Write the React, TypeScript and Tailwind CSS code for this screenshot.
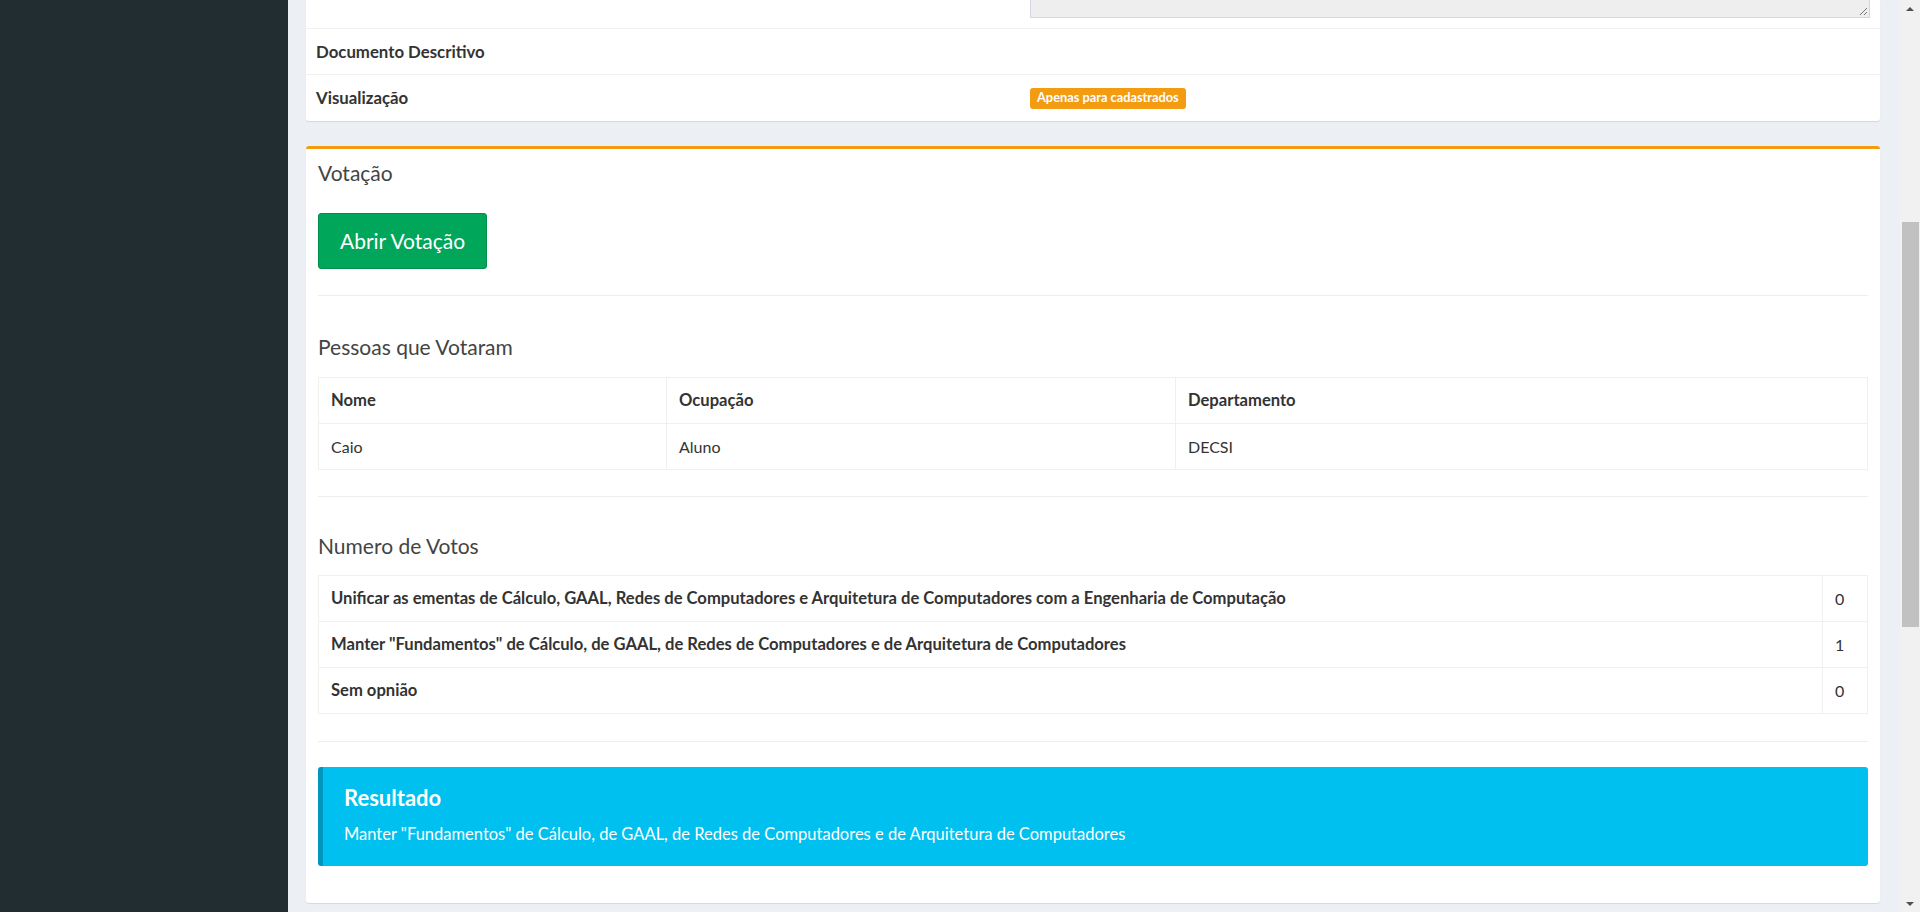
import React from 'react';

const font = { fontFamily: 'Lato, "Liberation Sans", sans-serif' };

const Divider = () => <div className="h-px bg-[#eeeeee]" />;

const SectionTitle = ({ children }: { children: React.ReactNode }) => (
  <h3 className="text-[21px] leading-[22px] text-[#444] font-normal">{children}</h3>
);

const InfoRow = ({
  label,
  children,
  last,
}: {
  label: string;
  children?: React.ReactNode;
  last?: boolean;
}) => (
  <div
    className={
      'grid grid-cols-[714px_1fr] h-[46px] items-center ' +
      (last ? '' : 'border-b border-[#f0f0f0]')
    }
  >
    <div className="px-[10px] text-[16.8px] font-bold text-[#333]">{label}</div>
    <div className="px-[10px] flex items-center">{children}</div>
  </div>
);

const people = [{ nome: 'Caio', ocupacao: 'Aluno', departamento: 'DECSI' }];

const votes = [
  {
    option:
      'Unificar as ementas de Cálculo, GAAL, Redes de Computadores e Arquitetura de Computadores com a Engenharia de Computação',
    count: 0,
  },
  {
    option:
      'Manter "Fundamentos" de Cálculo, de GAAL, de Redes de Computadores e de Arquitetura de Computadores',
    count: 1,
  },
  { option: 'Sem opnião', count: 0 },
];

const cell = 'border border-[#f0f0f0] h-[46px] px-[12px] text-left align-middle';
const normal = ' font-normal text-[16px]';
const bold = ' font-bold text-[16.6px]';

const Scrollbar = () => (
  <div className="w-[20px] h-full bg-[#f1f1f1] flex flex-col items-center">
    <div className="h-[17px] w-full flex items-center justify-center">
      <div className="w-0 h-0 border-x-[4px] border-x-transparent border-b-[4px] border-b-[#505050]" />
    </div>
    <div className="h-[205px]" />
    <div className="h-[405px] w-[17px] bg-[#c1c1c1]" />
    <div className="flex-1" />
    <div className="h-[17px] w-full flex items-center justify-center">
      <div className="w-0 h-0 border-x-[4px] border-x-transparent border-t-[4px] border-t-[#505050]" />
    </div>
  </div>
);

export default function App() {
  return (
    <div className="flex h-[912px] w-full overflow-hidden" style={font}>
      <aside className="w-[288px] shrink-0 bg-[#222d32]" />
      <main className="flex-1 bg-[#ecf0f5] pl-[18px] pr-[20px] overflow-hidden">
        {/* detalhes da proposta (parte de cima cortada) */}
        <div className="bg-white rounded-b-[3px] shadow-[0_1px_1px_rgba(0,0,0,0.1)]">
          <div className="grid grid-cols-[714px_1fr] grid-rows-[28px] h-[29px] border-b border-[#f0f0f0] overflow-hidden">
            <div />
            <div className="h-[28px] overflow-hidden px-[10px] flex items-end pb-[10px]">
              <div className="relative shrink-0 w-full h-[40px] bg-[#eeeeee] border border-[#d2d6de]">
                <svg
                  className="absolute right-[2px] bottom-[2px]"
                  width="8"
                  height="8"
                  viewBox="0 0 8 8"
                >
                  <path d="M1 8 L8 1 M5 8 L8 5" stroke="#777" strokeWidth="1" />
                </svg>
              </div>
            </div>
          </div>
          <InfoRow label="Documento Descritivo" />
          <InfoRow label="Visualização" last>
            <span className="inline-flex items-center h-[21px] px-[7px] rounded-[3px] bg-[#f39c12] text-white text-[12.8px] font-bold">
              Apenas para cadastrados
            </span>
          </InfoRow>
        </div>

        {/* votação */}
        <div className="mt-[25px] bg-white rounded-[3px] border-t-[3px] border-[#f39c12] shadow-[0_1px_1px_rgba(0,0,0,0.1)] px-[12px] pt-[13px] pb-[37px]">
          <SectionTitle>Votação</SectionTitle>
          <button className="mt-[29px] h-[56px] px-[21px] rounded-[3px] bg-[#00a65a] border border-[#008d4c] text-white text-[21px]">
            Abrir Votação
          </button>
          <div className="mt-[26px]">
            <Divider />
          </div>

          <div className="mt-[40px]">
            <SectionTitle>Pessoas que Votaram</SectionTitle>
          </div>
          <table className="mt-[19px] w-full border-collapse text-[#333]">
            <thead>
              <tr>
                <th className={cell + bold + ' w-[348px]'}>Nome</th>
                <th className={cell + bold + ' w-[509px]'}>Ocupação</th>
                <th className={cell + bold}>Departamento</th>
              </tr>
            </thead>
            <tbody>
              {people.map((p) => (
                <tr key={p.nome}>
                  <td className={cell + normal}>{p.nome}</td>
                  <td className={cell + normal}>{p.ocupacao}</td>
                  <td className={cell + normal}>{p.departamento}</td>
                </tr>
              ))}
            </tbody>
          </table>
          <div className="mt-[26px]">
            <Divider />
          </div>

          <div className="mt-[38px]">
            <SectionTitle>Numero de Votos</SectionTitle>
          </div>
          <table className="mt-[18px] w-full border-collapse text-[#333]">
            <tbody>
              {votes.map((v) => (
                <tr key={v.option}>
                  <td className={cell + bold}>{v.option}</td>
                  <td className={cell + normal + ' w-[45px]'}>{v.count}</td>
                </tr>
              ))}
            </tbody>
          </table>
          <div className="mt-[27px]">
            <Divider />
          </div>

          <div className="mt-[25px] h-[99px] rounded-[3px] bg-[#00c0ef] border-l-[5px] border-[#0097bc] pl-[21px] pt-[20px] text-white">
            <h4 className="text-[22px] leading-[22px] font-bold">Resultado</h4>
            <p className="mt-[14px] text-[16.5px] leading-[22px]">
              Manter "Fundamentos" de Cálculo, de GAAL, de Redes de Computadores e de Arquitetura
              de Computadores
            </p>
          </div>
        </div>
      </main>
      <Scrollbar />
    </div>
  );
}
